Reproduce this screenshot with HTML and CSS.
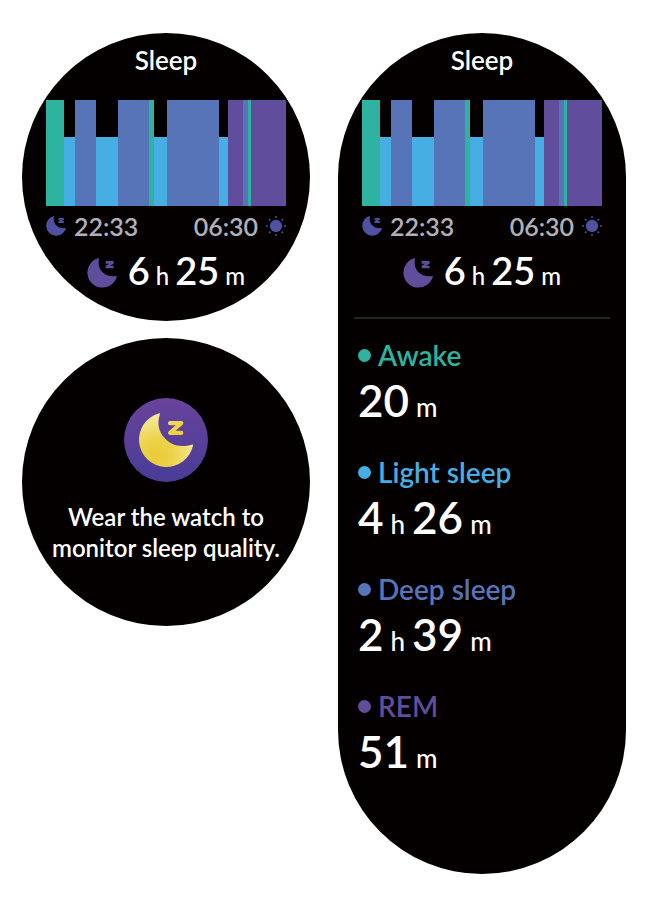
FILE: index.html
```
<!DOCTYPE html>
<html lang="en">
<head>
<meta charset="utf-8">
<meta name="viewport" content="width=device-width, initial-scale=1">
<title>Sleep</title>
<link rel="stylesheet" href="styles.css">
</head>
<body>
<svg class="symbols" aria-hidden="true">
  <symbol id="moon" viewBox="0 0 90 90">
    <path d="M36 0C33 21 36 32 46 42C57 53 71 56 90 54A45 45 0 1 1 36 0Z"/>
    <path d="M56 9H80V17L69 23H80V31H56V23L67 17H56Z"/>
  </symbol>
  <symbol id="sun" viewBox="0 0 60 60">
    <circle cx="30" cy="30" r="18.500"/>
    <g><circle cx="30" cy="3" r="3"/><circle cx="30" cy="57" r="3"/><circle cx="3" cy="30" r="3"/><circle cx="57" cy="30" r="3"/><circle cx="11" cy="11" r="3"/><circle cx="49" cy="11" r="3"/><circle cx="11" cy="49" r="3"/><circle cx="49" cy="49" r="3"/></g>
  </symbol>
</svg>
<main class="screens">
  <div class="column">
    <section class="watch round">
      <h1 class="title">Sleep</h1>
      <div class="chart">
        <i class="awake" style="flex-grow:18"></i><i class="light" style="flex-grow:11"></i><i class="deep" style="flex-grow:21"></i><i class="light" style="flex-grow:22"></i><i class="deep" style="flex-grow:31"></i><i class="awake" style="flex-grow:5"></i><i class="light" style="flex-grow:13"></i><i class="deep" style="flex-grow:52"></i><i class="light" style="flex-grow:9"></i><i class="rem" style="flex-grow:15"></i><i class="deep" style="flex-grow:5"></i><i class="awake" style="flex-grow:3"></i><i class="rem" style="flex-grow:35"></i>
      </div>
      <div class="times">
        <span class="time"><svg class="small-icon"><use href="#moon"/></svg>22:33</span>
        <span class="time">06:30<svg class="small-icon"><use href="#sun"/></svg></span>
      </div>
      <p class="total"><svg class="moon-icon"><use href="#moon"/></svg><span class="duration"><b>6</b><span>h</span><b>25</b><span>m</span></span></p>
    </section>
    <section class="watch round notice">
      <svg class="badge" viewBox="0 0 252 252" aria-hidden="true">
        <defs>
          <linearGradient id="disc" x1="0" y1="0" x2="0" y2="1"><stop offset="0" stop-color="#69439a"/><stop offset="1" stop-color="#493c98"/></linearGradient>
          <radialGradient id="gold" gradientUnits="userSpaceOnUse" cx="98" cy="172" r="130"><stop offset="0" stop-color="#eacb37"/><stop offset="0.400" stop-color="#edd34c"/><stop offset="1" stop-color="#f7eda9"/></radialGradient>
          <linearGradient id="zed" x1="0" y1="0" x2="1" y2="1"><stop offset="0" stop-color="#f1db62"/><stop offset="1" stop-color="#eacb37"/></linearGradient>
        </defs>
        <circle cx="126" cy="126" r="126" fill="url(#disc)"/>
        <path d="M105 46Q110 44 107 51C99 77 104 102 122 120C143 143 169 149 203 140Q209 138 207 143A82 82 0 1 1 105 46Z" fill="url(#gold)"/>
        <path d="M138 69H172Q178 69 178 75Q178 79 174 82L155 98H172Q178 98 178 104Q178 111 172 111H139Q132 111 132 105Q132 101 136 98L155 82H138Q132 82 132 76Q132 69 138 69Z" fill="url(#zed)"/>
      </svg>
      <p class="message">Wear the watch to<br>monitor sleep quality.</p>
    </section>
  </div>
  <section class="watch long">
    <h2 class="title">Sleep</h2>
    <div class="chart">
      <i class="awake" style="flex-grow:18"></i><i class="light" style="flex-grow:11"></i><i class="deep" style="flex-grow:21"></i><i class="light" style="flex-grow:22"></i><i class="deep" style="flex-grow:31"></i><i class="awake" style="flex-grow:5"></i><i class="light" style="flex-grow:13"></i><i class="deep" style="flex-grow:52"></i><i class="light" style="flex-grow:9"></i><i class="rem" style="flex-grow:15"></i><i class="deep" style="flex-grow:5"></i><i class="awake" style="flex-grow:3"></i><i class="rem" style="flex-grow:35"></i>
    </div>
    <div class="times">
      <span class="time"><svg class="small-icon"><use href="#moon"/></svg>22:33</span>
      <span class="time">06:30<svg class="small-icon"><use href="#sun"/></svg></span>
    </div>
    <p class="total"><svg class="moon-icon"><use href="#moon"/></svg><span class="duration"><b>6</b><span>h</span><b>25</b><span>m</span></span></p>
    <hr class="divider">
    <dl class="stages">
      <div class="stage"><dt class="label awake-text">Awake</dt><dd class="duration"><b>20</b><span>m</span></dd></div>
      <div class="stage"><dt class="label light-text">Light sleep</dt><dd class="duration"><b>4</b><span>h</span><b>26</b><span>m</span></dd></div>
      <div class="stage"><dt class="label deep-text">Deep sleep</dt><dd class="duration"><b>2</b><span>h</span><b>39</b><span>m</span></dd></div>
      <div class="stage"><dt class="label rem-text">REM</dt><dd class="duration"><b>51</b><span>m</span></dd></div>
    </dl>
  </section>
</main>
</body>
</html>
```
FILE: styles.css
```
* { box-sizing: border-box; }
body {
  margin: 0;
  background: #fff;
  color: #fff;
  font-family: Lato, "Noto Sans", sans-serif;
  font-weight: 600;
}
h1, h2, p, dl, dd { margin: 0; }
.symbols { position: absolute; width: 0; height: 0; }
.screens {
  display: grid;
  grid-template-columns: 1fr 1fr;
  gap: 28px;
  max-width: 660px;
  margin: 0 auto;
  padding: 33px 34px 26px 22px;
}
.column { display: flex; flex-direction: column; gap: 17px; }
.watch { background: #040000; }
.round { border-radius: 50%; aspect-ratio: 1; }
.long { border-radius: 144px; }
.title {
  padding-top: 11px;
  font-size: 26px;
  line-height: 32px;
  font-weight: 600;
  text-align: center;
}
.chart {
  display: flex;
  align-items: flex-end;
  height: 106px;
  margin: 24px 24px 0;
}
.chart i { flex-basis: 0; height: 100%; }
.chart .light { height: 65%; background: #47aee3; }
.awake { background: #2db3a0; }
.deep { background: #5874b8; }
.rem { background: #604d9c; }
.times {
  display: flex;
  justify-content: space-between;
  margin: 4px 24px 0;
  color: #b0b0ba;
  font-size: 25px;
  line-height: 32px;
}
.time { display: flex; align-items: center; gap: 8px; }
.small-icon { width: 20px; height: 20px; fill: #4f51a3; }
.total {
  display: flex;
  justify-content: center;
  align-items: center;
  gap: 11px;
  height: 62px;
}
.moon-icon { width: 30px; height: 30px; fill: #604d9c; }
.duration {
  display: flex;
  align-items: baseline;
  gap: 6px;
  font-size: 24px;
  font-weight: 500;
  line-height: 48px;
}
.duration b { font-size: 38px; font-weight: 600; }
.divider {
  height: 2px;
  margin: 13px 16px 0;
  border: 0;
  background: #282424;
}
.stages {
  display: grid;
  gap: 24px;
  padding: 19px 20px 92px;
}
.label {
  display: flex;
  align-items: center;
  gap: 7px;
  margin-bottom: 4px;
  font-size: 28px;
  line-height: 34px;
}
.label::before {
  content: "";
  width: 13px;
  height: 13px;
  border-radius: 50%;
  background: currentColor;
}
.stage .duration { gap: 7px; font-size: 26px; }
.stage b { font-size: 44px; }
.awake-text { color: #2db3a0; }
.light-text { color: #47aee3; }
.deep-text { color: #5874b8; }
.rem-text { color: #604d9c; }
.notice {
  display: flex;
  flex-direction: column;
  align-items: center;
  gap: 19px;
  padding-top: 60px;
}
.badge { width: 84px; height: 84px; }
.message {
  font-size: 24px;
  line-height: 31px;
  text-align: center;
  white-space: nowrap;
}
```
